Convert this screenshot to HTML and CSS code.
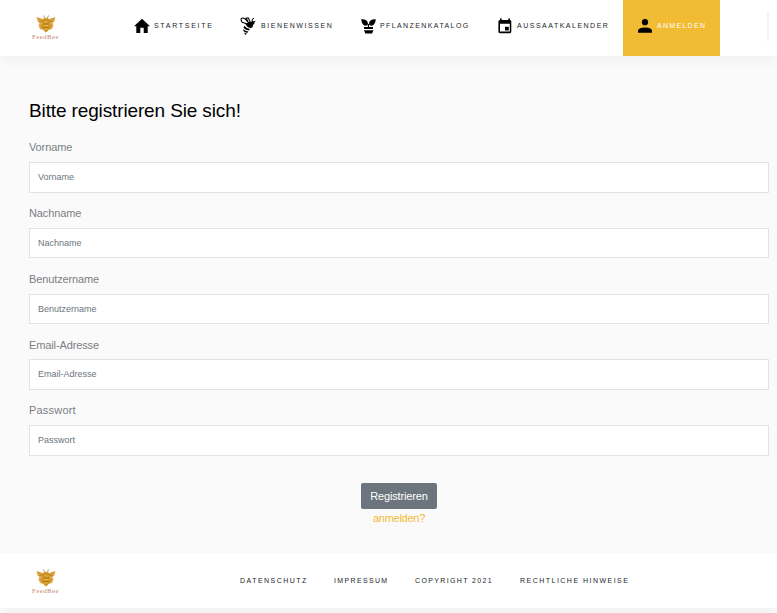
FILE: index.html
```html
<!DOCTYPE html>
<html lang="de">
<head>
<meta charset="utf-8">
<title>FeedBee</title>
<link rel="stylesheet" href="styles.css">
</head>
<body>
<svg class="defs" width="0" height="0">
  <symbol id="bee" viewBox="0 0 20 18">
    <path d="M7 4 .5 2 1.5 6.5 3.5 8 2.5 10.5 4 14 7 15 9 13V4ZM13 4 19.5 2 18.5 6.5 16.5 8 17.5 10.5 16 14 13 15 11 13V4Z" fill="#e2ad43"/>
    <path d="m2 3.5 6 3.5-5-.5m15-3-6 3.5 5-.5M4 11l4-2m8 2-4-2M5 13l3-2m7 2-3-2" fill="none" stroke="#b8782d" stroke-width=".8"/>
    <path d="M6.5 4.5Q10 1 13.5 4.5L13 7 14 10Q14 15 10 17.5 6 15 6 10L7 7Z" fill="#ce9328"/>
    <path d="M8.5 3 7.5 .5M11.5 3 12.5 .5M7 9h6M6.5 12.5h7" fill="none" stroke="#a96d24" stroke-width=".7"/>
    <path d="M8.5 7h3M7.5 10.7h5M8.5 14h3" stroke="#e9bd38" stroke-width="1"/>
  </symbol>
</svg>
<header class="header">
  <a class="logo"><svg class="logo-bee"><use href="#bee"/></svg><span class="logo-name">FeedBee</span></a>
  <nav class="nav">
    <a class="nav-item home"><svg class="icon" viewBox="0 0 16 16"><path d="M8 .8 0 8.3h2.3V15h4V9.7h3.4V15h4V8.3H16Z"/></svg><span>STARTSEITE</span></a>
    <a class="nav-item bees"><svg class="icon icon-bee" viewBox="0 0 16 18"><path d="M8 7.2 2.2 5.3Q.5 2.5 1.4 1.5 3 .3 5.2 2L8.3 5.5 6.2 1.2 8.2.8 10 4.5" fill="none" stroke="#000" stroke-width="1.1"/><path d="M8.5 5Q10 4 11.3 4.7 12.5 3.2 14.5 5 15 7 13 8 13.3 10.6 10.8 11.3L8 10.3 5.5 7.5Z"/><path d="M12 4.5 12.5 2l1.5-.8M13.5 5l1.8-.8" fill="none" stroke="#000" stroke-width="1"/><path d="M4.2 8.8Q6 11.3 10 12L8.8 13.6Q4.8 13 3.6 10.8ZM3.3 12.3Q5 14.2 8.3 14.4L7.2 15.9Q4 15.5 3.2 13.6ZM3.8 15.8l3 .7-1.1 1.5Z"/></svg><span>BIENENWISSEN</span></a>
    <a class="nav-item plants"><svg class="icon icon-plant" viewBox="0 0 15 15"><path d="M.2.2Q6-.4 7 4.2L6.5 6.3 4.5 6.8Q.8 6 .2.2ZM14.8.2Q9-.4 8 4.2L8.5 6.3 10.5 6.8Q14.2 6 14.8.2ZM6.9 5h1.2v3H12v2H3V8h3.9ZM3 11.3h9.5L11 14.5H4.3Z"/></svg><span>PFLANZENKATALOG</span></a>
    <a class="nav-item calendar"><svg class="icon icon-cal" viewBox="0 0 14 16"><path fill-rule="evenodd" d="M2 .5h1.7V2h6.6V.5H12V2q1.3 0 1.3 1.5v10.3q0 1.4-1.4 1.4H1.8Q.4 15.2.4 13.8V3.5Q.4 2 2 2ZM2 5.8v7.8h9.8V5.8ZM7 8.7h3.8v3.8H7Z"/></svg><span>AUSSAATKALENDER</span></a>
    <a class="nav-item active"><svg class="icon icon-user" viewBox="0 0 14 14"><circle cx="7" cy="3.2" r="3.1"/><path d="M0 13.7v-1.5Q0 8.5 7 8.5t7 3.7v1.5Z"/></svg><span>ANMELDEN</span></a>
  </nav>
  <span class="divider"></span>
</header>
<main class="main">
  <h1>Bitte registrieren Sie sich!</h1>
  <form>
    <div class="field"><label for="vorname">Vorname</label><input id="vorname" placeholder="Vorname"></div>
    <div class="field"><label for="nachname">Nachname</label><input id="nachname" placeholder="Nachname"></div>
    <div class="field"><label for="benutzer">Benutzername</label><input id="benutzer" placeholder="Benutzername"></div>
    <div class="field email"><label for="email">Email-Adresse</label><input id="email" placeholder="Email-Adresse"></div>
    <div class="field password"><label for="passwort">Passwort</label><input id="passwort" type="password" placeholder="Passwort"></div>
    <div class="actions"><button type="button">Registrieren</button><a class="login">anmelden?</a></div>
  </form>
</main>
<footer class="footer">
  <a class="logo"><svg class="logo-bee"><use href="#bee"/></svg><span class="logo-name">FeedBee</span></a>
  <nav class="footer-nav"><a class="privacy">DATENSCHUTZ</a><a class="imprint">IMPRESSUM</a><a class="copyright">COPYRIGHT 2021</a><a class="legal">RECHTLICHE HINWEISE</a></nav>
</footer>
</body>
</html>
```
FILE: styles.css
```css
* { box-sizing: border-box; }
body {
  margin: 0;
  height: 613px;
  overflow: hidden;
  background: #fafafa;
  font-family: "Liberation Sans", Arial, sans-serif;
}
.defs { display: block; }
.header, .footer {
  display: flex;
  background: #fff;
  box-shadow: 0 8px 10px -2px rgba(0, 0, 0, .035);
}
.header { height: 56px; }
.logo {
  display: flex;
  flex-direction: column;
  align-items: center;
  width: 30px;
  margin-left: 30px;
  padding: 15px 0 0 1px;
}
.logo-bee { display: block; width: 20px; height: 18px; flex: none; }
.logo-name {
  font: 6.5px/7px "Liberation Serif", "Times New Roman", serif;
  letter-spacing: .6px;
  color: #c4806f;
}
.nav { display: flex; margin-left: 60px; }
.nav-item {
  display: flex;
  align-items: center;
  padding: 0 0 4px 14px;
  font-size: 7px;
  letter-spacing: 1.3px;
  color: #212529;
  white-space: nowrap;
}
.nav-item span { margin-top: -2px; }
.icon { width: 16px; height: 16px; margin-right: 4px; flex: none; }
.home { width: 106px; letter-spacing: 1.7px; }
.bees { width: 121px; letter-spacing: 1.55px; }
.plants { width: 137px; letter-spacing: 1.4px; }
.calendar { width: 139px; letter-spacing: 1.5px; }
.icon-bee { height: 18px; margin-right: 5px; }
.icon-plant { width: 15px; height: 15px; }
.icon-cal { width: 14px; margin-right: 5px; }
.icon-user { width: 14px; height: 14px; margin: 0 5px 0 1px; }
.active { width: 97px; background: #f1bb33; color: #fff; }
.divider { width: 2px; height: 30px; margin: 11px 0 0 47px; background: #f2f2f2; }
.main { height: 497px; padding: 43px 8px 0 29px; }
h1 { margin: 0 0 17px; font-size: 19px; line-height: 24px; letter-spacing: -.13px; font-weight: 400; color: #000; }
.field { height: 65.8px; }
.field label { display: block; height: 22px; font-size: 11px; line-height: 14px; letter-spacing: -.12px; color: #7a7f84; }
.email label { padding-top: .4px; }
.password label { letter-spacing: .2px; }
.field input {
  display: block;
  width: 100%;
  height: 30.5px;
  padding: 0 8px .3px;
  border: 1px solid #e3e3e3;
  border-radius: 0;
  background: #fff;
  font: 9px "Liberation Sans", Arial, sans-serif;
}
.field input::placeholder { color: #6c757d; opacity: 1; }
.actions { display: flex; flex-direction: column; align-items: center; padding-top: 14px; }
button {
  width: 76px;
  height: 26px;
  padding: 0;
  border: 0;
  border-radius: 2px;
  background: #6c757d;
  color: #fff;
  font: 11px "Liberation Sans", Arial, sans-serif;
  letter-spacing: -.15px;
}
.login { margin-top: 2px; font-size: 11px; line-height: 14px; letter-spacing: -.25px; color: #f1bb33; }
.footer { height: 55px; }
.footer .logo { padding-top: 16px; }
.footer-nav { display: flex; align-items: center; margin-left: 180px; font-size: 7px; letter-spacing: 1.48px; color: #212529; white-space: nowrap; }
.privacy { width: 94px; }
.imprint { width: 81px; letter-spacing: 1.35px; }
.copyright { width: 105px; letter-spacing: 1.35px; }
```
